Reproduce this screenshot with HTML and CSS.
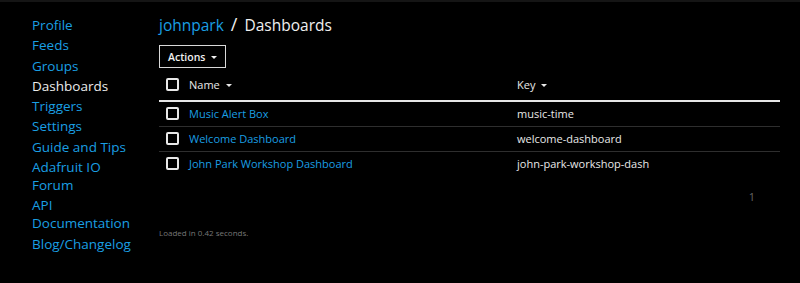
FILE: index.html
```html
<!DOCTYPE html>
<html lang="en">
  <head>
    <meta charset="UTF-8" />
    <meta name="viewport" content="width=device-width, initial-scale=1.0" />
    <title>Dashboards</title>
    <link rel="stylesheet" href="styles.css">
  </head>
  <body>
    <div class="page">
      <nav class="sidebar">
        <a href="#">Profile</a>
        <a href="#">Feeds</a>
        <a href="#">Groups</a>
        <a href="#" class="current">Dashboards</a>
        <a href="#">Triggers</a>
        <a href="#">Settings</a>
        <a href="#">Guide and Tips</a>
        <a href="#">Adafruit IO<br />Forum</a>
        <a href="#">API<br />Documentation</a>
        <a href="#">Blog/Changelog</a>
      </nav>
      <main class="content">
        <h2 class="title"><a href="#">johnpark</a> <span class="slash">/</span> Dashboards</h2>
        <button class="actions">Actions <span class="caret"></span></button>
        <table class="list">
          <thead>
            <tr>
              <th class="check"><span class="box"></span></th>
              <th class="name">Name <span class="caret"></span></th>
              <th>Key <span class="caret"></span></th>
            </tr>
          </thead>
          <tbody>
            <tr>
              <td class="check"><span class="box"></span></td>
              <td class="name"><a href="#">Music Alert Box</a></td>
              <td>music-time</td>
            </tr>
            <tr>
              <td class="check"><span class="box"></span></td>
              <td class="name"><a href="#">Welcome Dashboard</a></td>
              <td>welcome-dashboard</td>
            </tr>
            <tr>
              <td class="check"><span class="box"></span></td>
              <td class="name"><a href="#">John Park Workshop Dashboard</a></td>
              <td>john-park-workshop-dash</td>
            </tr>
          </tbody>
        </table>
        <div class="pager">1</div>
        <p class="loaded">Loaded in 0.42 seconds.</p>
      </main>
    </div>
  </body>
</html>
```

FILE: styles.css
```css
* {
  box-sizing: border-box;
}
body {
  margin: 0;
  background: #000;
  color: #e8e8e8;
  font-family: "Open Sans", Arial, sans-serif;
  border-top: 2px solid #151515;
  height: 283px;
  overflow: hidden;
}
a {
  color: #1a9fe3;
  text-decoration: none;
}
.page {
  display: flex;
}
.sidebar {
  width: 159px;
  padding: 14px 0 0 32px;
  display: flex;
  flex-direction: column;
  gap: 2.3px;
}
.sidebar a {
  font-size: 13.5px;
  line-height: 18px;
}
.sidebar a.current {
  color: #ececec;
}
.content {
  width: 621px;
  padding-top: 11px;
}
.title {
  margin: 0;
  font-size: 15.5px;
  font-weight: 400;
  line-height: 22px;
  color: #f0f0f0;
}
.slash {
  margin: 0 3px;
  font-size: 18px;
}
.actions {
  display: block;
  margin-top: 9px;
  height: 23px;
  padding: 0 8px;
  background: #000;
  color: #f0f0f0;
  border: 1px solid #d8d8d8;
  font-family: inherit;
  font-size: 10.5px;
  font-weight: 600;
}
.caret {
  display: inline-block;
  width: 0;
  height: 0;
  margin-left: 3px;
  vertical-align: middle;
  border-left: 3px solid transparent;
  border-right: 3px solid transparent;
  border-top: 3px solid currentColor;
}
.list {
  width: 100%;
  margin-top: 3px;
  border-collapse: collapse;
  font-size: 11px;
}
.list th {
  text-align: left;
  font-weight: 400;
  height: 30px;
  padding: 0 0 3px;
  border-bottom: 2px solid #e6e6e6;
}
.list td {
  height: 25px;
  padding: 0;
  border-bottom: 1px solid #2e2e2e;
}
.list tr:last-child td {
  border-bottom: none;
}
.list .check {
  width: 30px;
  padding-left: 7px;
}
.list .name {
  width: 328px;
}
.box {
  display: block;
  width: 13px;
  height: 13px;
  border: 2px solid #e8e8e8;
  border-radius: 2px;
}
.pager {
  text-align: right;
  padding-right: 25px;
  margin-top: 13px;
  font-size: 11px;
  color: #666;
}
.loaded {
  margin: 23px 0 0;
  font-size: 8px;
  color: #777;
}
```
